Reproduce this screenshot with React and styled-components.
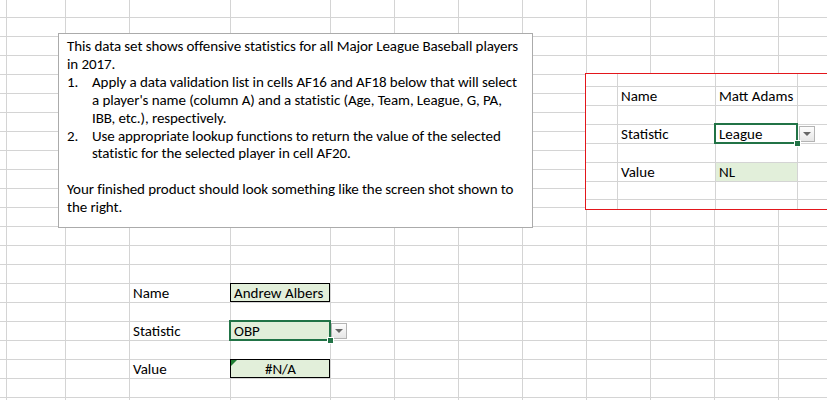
import styled, { createGlobalStyle, css } from "styled-components"

const GlobalStyle = createGlobalStyle`
  html, body {
    margin: 0;
    padding: 0;
    background: #fff;
    overflow: hidden;
  }
  body {
    font-family: Carlito, Lato, "Liberation Sans", sans-serif;
    color: #000;
  }
`

const GRID_LINE = "#d4d4d4"
const SELECT_GREEN = "#217346"
const CELL_FILL = "#e2efda"

// sheet columns / rows in px (each includes its right / bottom gridline)
const SHEET_COLS = [2, 64, 64, 101, 100, 64, 64, 64, 64, 64, 64, 64, 64]
const SHEET_ROWS = [18, ...Array(22).fill(19)]

// the pasted screenshot on the right has its own little grid
const SHOT_COLS = [32, 98, 82, 64]
const SHOT_ROWS = [13, 19, 19, 19, 19, 19, 18, 9]

const Sheet = styled.div`
  position: relative;
  width: 827px;
  height: 400px;
  overflow: hidden;
  background: #fff;
`

const Grid = styled.div`
  display: grid;
  grid-template-columns: ${(p) => p.$cols.map((w) => w + "px").join(" ")};
  grid-template-rows: ${(p) => p.$rows.map((h) => h + "px").join(" ")};
`

const Cell = styled.div`
  position: relative;
  box-sizing: border-box;
  display: flex;
  align-items: center;
  justify-content: ${(p) => (p.$center ? "center" : "flex-start")};
  padding: 0 3px;
  border-right: 1px solid ${GRID_LINE};
  border-bottom: ${(p) => (p.$noBottom ? "none" : `1px solid ${GRID_LINE}`)};
  background: ${(p) => p.$fill || "transparent"};
  background-clip: padding-box;
  font-size: 15px;
  line-height: 18px;
  white-space: nowrap;

  ${(p) =>
    p.$box === "thin" &&
    css`
      z-index: 1;
      &::before {
        content: "";
        position: absolute;
        top: -1px;
        left: -1px;
        right: 0;
        bottom: 0;
        border: 1px solid #000;
        pointer-events: none;
      }
    `}

  ${(p) =>
    p.$box === "selected" &&
    css`
      z-index: 2;
      &::before {
        content: "";
        position: absolute;
        top: -2px;
        left: -2px;
        right: -1px;
        bottom: -1px;
        border: 2px solid ${SELECT_GREEN};
        pointer-events: none;
      }
      &::after {
        content: "";
        position: absolute;
        right: -3px;
        bottom: -3px;
        width: 5px;
        height: 5px;
        background: ${SELECT_GREEN};
        box-shadow: 0 0 0 1px #fff;
      }
    `}

  ${(p) =>
    p.$error &&
    css`
      &::after {
        content: "";
        position: absolute;
        top: 0;
        left: 0;
        border-top: 6px solid #1e7d32;
        border-right: 6px solid transparent;
      }
    `}
`

const Dropdown = styled.div`
  position: absolute;
  left: ${(p) => p.$offset}px;
  top: 1px;
  width: 16px;
  height: 16px;
  box-sizing: border-box;
  border: 1px solid #b4b4b4;
  background: linear-gradient(#fdfdfd, #e6e6e6);
  display: flex;
  align-items: center;
  justify-content: center;

  &::before {
    content: "";
    border-left: 4px solid transparent;
    border-right: 4px solid transparent;
    border-top: 4px solid #666;
  }
`

const TextBox = styled.div`
  position: absolute;
  left: 58px;
  top: 33px;
  width: 475px;
  height: 195px;
  box-sizing: border-box;
  border: 1px solid #ababab;
  background: #fff;
  padding: 4px 8px 0 8px;
  font-size: 15px;
  line-height: 17.9px;
  letter-spacing: -0.09px;
  white-space: nowrap;
  z-index: 5;
`

const Para = styled.p`
  margin: 0 0 ${(p) => (p.$gap ? "17.9px" : "0")};
`

const List = styled.ol`
  margin: 0;
  padding: 0;
  list-style: none;
`

const Item = styled.li`
  display: flex;
`

const Num = styled.span`
  flex: 0 0 25px;
`

const Shot = styled.div`
  position: absolute;
  left: 585px;
  top: 73px;
  width: 260px;
  height: 137px;
  box-sizing: border-box;
  border: 1px solid #e3161b;
  background: #fff;
  overflow: hidden;
  z-index: 5;
`

const sheetCells = {
  "15-3": { text: "Name" },
  "15-4": { text: "Andrew Albers", box: "thin", fill: CELL_FILL },
  "17-3": { text: "Statistic" },
  "17-4": { text: "OBP", box: "selected", fill: CELL_FILL, dropdown: 100 },
  "19-3": { text: "Value" },
  "19-4": { text: "#N/A", box: "thin", fill: CELL_FILL, center: true, error: true },
}

const shotCells = {
  "1-1": { text: "Name" },
  "1-2": { text: "Matt Adams" },
  "3-1": { text: "Statistic" },
  "3-2": { text: "League", box: "selected", dropdown: 83 },
  "5-1": { text: "Value" },
  "5-2": { text: "NL", fill: CELL_FILL },
}

const SpreadGrid = ({ cols, rows, cells, openBottom }) => (
  <Grid $cols={cols} $rows={rows}>
    {rows.map((_, r) =>
      cols.map((__, c) => {
        const cell = cells[`${r}-${c}`] || {}
        return (
          <Cell
            key={`${r}-${c}`}
            $fill={cell.fill}
            $box={cell.box}
            $center={cell.center}
            $error={cell.error}
            $noBottom={openBottom && r === rows.length - 1}
          >
            {cell.text}
            {cell.dropdown && <Dropdown $offset={cell.dropdown} />}
          </Cell>
        )
      })
    )}
  </Grid>
)

export default function App() {
  return (
    <Sheet>
      <GlobalStyle />
      <SpreadGrid cols={SHEET_COLS} rows={SHEET_ROWS} cells={sheetCells} />

      <TextBox>
        <Para>
          This data set shows offensive statistics for all Major League Baseball players
          <br />
          in 2017.
        </Para>
        <List>
          <Item>
            <Num>1.</Num>
            <span>
              Apply a data validation list in cells AF16 and AF18 below that will select
              <br />
              a player's name (column A) and a statistic (Age, Team, League, G, PA,
              <br />
              IBB, etc.), respectively.
            </span>
          </Item>
          <Item>
            <Num>2.</Num>
            <span>
              Use appropriate lookup functions to return the value of the selected
              <br />
              statistic for the selected player in cell AF20.
            </span>
          </Item>
        </List>
        <Para $gap />
        <Para>
          Your finished product should look something like the screen shot shown to
          <br />
          the right.
        </Para>
      </TextBox>

      <Shot>
        <SpreadGrid cols={SHOT_COLS} rows={SHOT_ROWS} cells={shotCells} openBottom />
      </Shot>
    </Sheet>
  )
}
